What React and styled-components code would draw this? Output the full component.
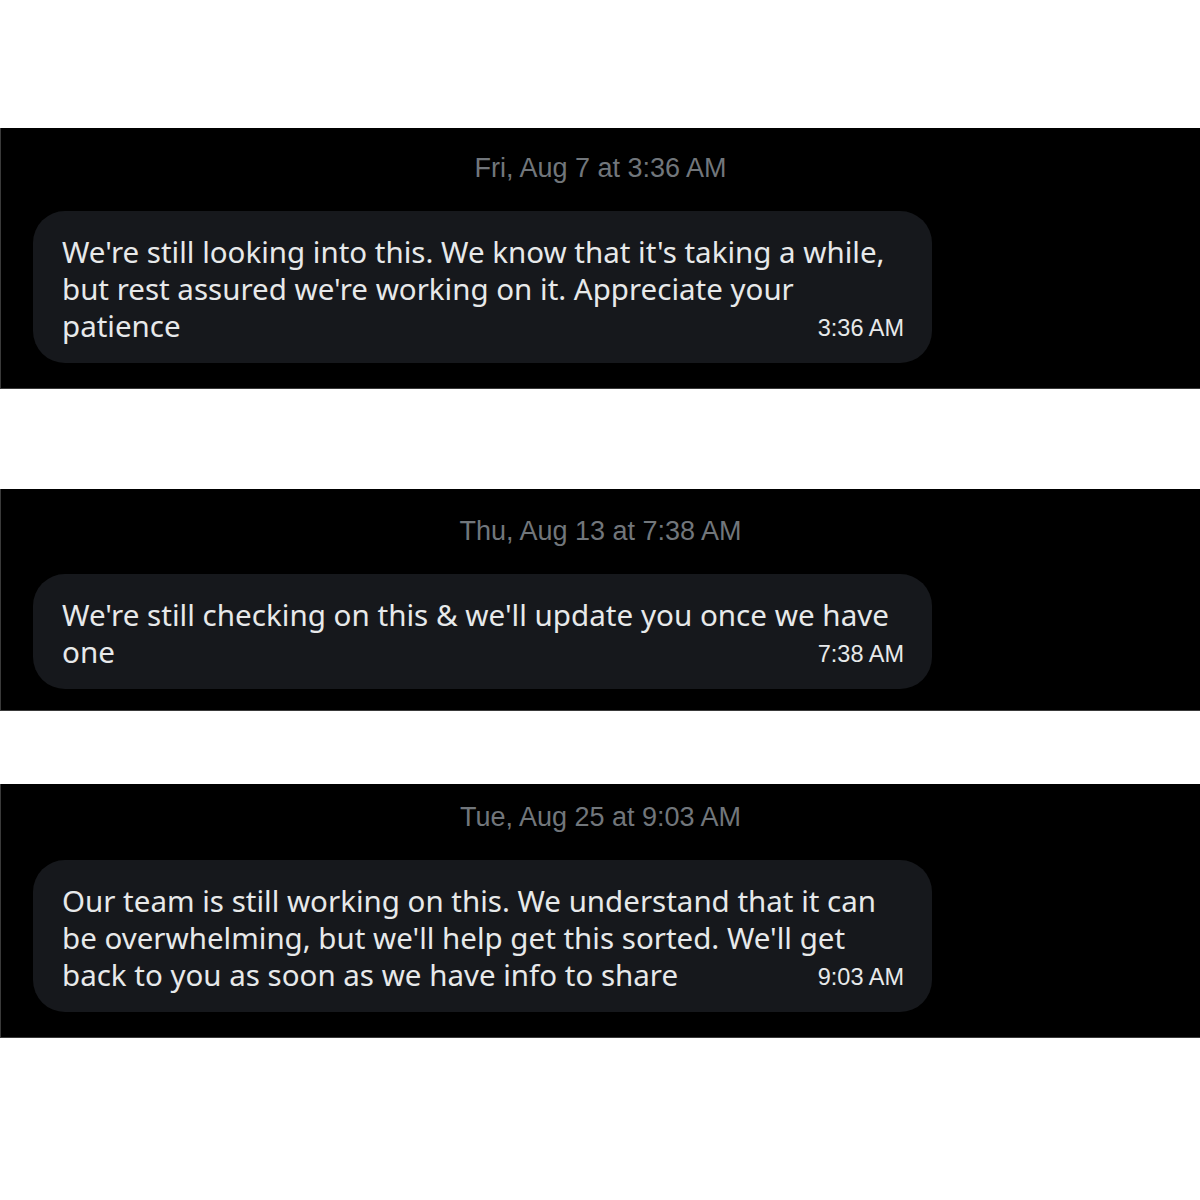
import React from "react";
import styled, { createGlobalStyle } from "styled-components";

const GlobalStyle = createGlobalStyle`
  body {
    margin: 0;
    background: #ffffff;
  }
`;

const Page = styled.div`
  width: 1200px;
  padding-top: 128px;
  display: flex;
  flex-direction: column;
`;

const Panel = styled.section`
  background: #000000;
  margin-top: ${(p) => p.$gap || 0}px;
  padding: ${(p) => p.$top}px 0 ${(p) => p.$bottom}px;
  border-bottom: 1px solid #3a3a3a;
  border-left: 1px solid #3a3a3a;
  display: flex;
  flex-direction: column;
`;

const DateLine = styled.div`
  font-family: "Liberation Sans", Arial, sans-serif;
  font-size: 27px;
  line-height: 30px;
  color: #71767b;
  text-align: center;
  margin-bottom: 28px;
`;

const Bubble = styled.div`
  margin-left: 32px;
  width: 899px;
  box-sizing: border-box;
  background: #16181c;
  border-radius: 32px;
  padding: 22px 28px 19px 29px;
`;

const Body = styled.p`
  margin: 0;
  font-family: "Noto Sans", sans-serif;
  font-size: ${(p) => p.$size}px;
  line-height: 37px;
  color: #e7e9ea;
  white-space: nowrap;
`;

const Time = styled.div`
  margin-top: -37px;
  padding-top: 3px;
  height: 34px;
  text-align: right;
  font-family: "Liberation Sans", Arial, sans-serif;
  font-size: 23.5px;
  line-height: 37px;
  color: #e7e9ea;
`;

const messages = [
  {
    date: "Fri, Aug 7 at 3:36 AM",
    lines: [
      "We're still looking into this. We know that it's taking a while,",
      "but rest assured we're working on it. Appreciate your",
      "patience",
    ],
    time: "3:36 AM",
    size: 29.5,
    gap: 0,
    top: 25,
    bottom: 25,
  },
  {
    date: "Thu, Aug 13 at 7:38 AM",
    lines: ["We're still checking on this & we'll update you once we have", "one"],
    time: "7:38 AM",
    size: 29.6,
    gap: 100,
    top: 27,
    bottom: 21,
  },
  {
    date: "Tue, Aug 25 at 9:03 AM",
    lines: [
      "Our team is still working on this. We understand that it can",
      "be overwhelming, but we'll help get this sorted. We'll get",
      "back to you as soon as we have info to share",
    ],
    time: "9:03 AM",
    size: 29.5,
    gap: 73,
    top: 18,
    bottom: 25,
  },
];

const App = () => {
  return (
    <>
      <GlobalStyle />
      <Page>
        {messages.map((m) => (
          <Panel key={m.date} $gap={m.gap} $top={m.top} $bottom={m.bottom}>
            <DateLine>{m.date}</DateLine>
            <Bubble>
              <Body $size={m.size}>
                {m.lines.map((line, i) => (
                  <React.Fragment key={i}>
                    {i > 0 && <br />}
                    {line}
                  </React.Fragment>
                ))}
              </Body>
              <Time>{m.time}</Time>
            </Bubble>
          </Panel>
        ))}
      </Page>
    </>
  );
};

export default App;
